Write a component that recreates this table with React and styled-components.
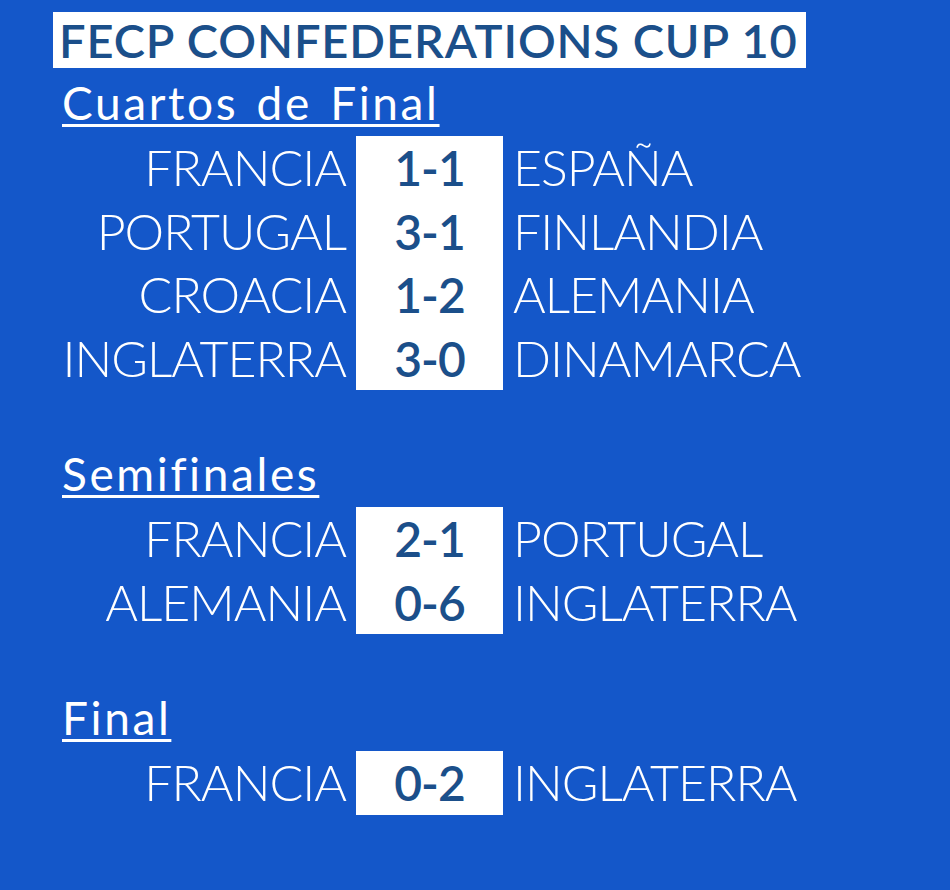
import React from "react";
import styled, { createGlobalStyle } from "styled-components";

const Global = createGlobalStyle`
  html, body { margin: 0; padding: 0; background: #1457c9; }
  body { font-family: "Lato", "Noto Sans", sans-serif; }
`;

const Page = styled.div`
  width: 950px;
  height: 890px;
  background: #1457c9;
  padding: 12px 0 0 53px;
  box-sizing: border-box;
  color: #ffffff;
`;

const TitleBox = styled.div`
  display: block;
  background: #ffffff;
  color: #1b4f8a;
  font-size: 47px;
  font-weight: 600;
  line-height: 57px;
  height: 56px;
  width: 753px;
  box-sizing: border-box;
  padding-left: 6px;
  white-space: nowrap;
  letter-spacing: 0.9px;
  overflow: hidden;
`;

const Section = styled.section`
  margin-top: ${(p) => p.$top}px;
`;

const Heading = styled.div`
  font-size: 46px;
  line-height: 58px;
  height: 58px;
  padding-top: 6px;
  margin: 0 0 4px 9px;
  text-decoration: underline;
  text-decoration-thickness: 3px;
  text-underline-offset: 4px;
  letter-spacing: 2.6px;
  word-spacing: 4px;
`;

const Table = styled.div`
  display: grid;
  grid-template-columns: 293px 147px auto;
  column-gap: 10px;
`;

const Team = styled.div`
  height: 63.5px;
  line-height: 63.5px;
  font-size: 50px;
  font-weight: 300;
  text-align: ${(p) => (p.$side === "left" ? "right" : "left")};
  white-space: nowrap;
  letter-spacing: -1px;
`;

const Score = styled.div`
  height: 63.5px;
  line-height: 63.5px;
  background: #ffffff;
  color: #1b4f8a;
  font-size: 48px;
  font-weight: 600;
  letter-spacing: -1px;
  text-align: center;
`;

const sections = [
  {
    title: "Cuartos de Final",
    top: 0,
    games: [
      ["FRANCIA", "1-1", "ESPAÑA"],
      ["PORTUGAL", "3-1", "FINLANDIA"],
      ["CROACIA", "1-2", "ALEMANIA"],
      ["INGLATERRA", "3-0", "DINAMARCA"],
    ],
  },
  {
    title: "Semifinales",
    top: 49,
    games: [
      ["FRANCIA", "2-1", "PORTUGAL"],
      ["ALEMANIA", "0-6", "INGLATERRA"],
    ],
  },
  {
    title: "Final",
    top: 49,
    games: [["FRANCIA", "0-2", "INGLATERRA"]],
  },
];

export default function App() {
  return (
    <>
      <Global />
      <Page>
        <TitleBox>FECP CONFEDERATIONS CUP 10</TitleBox>
        {sections.map((s) => (
          <Section key={s.title} $top={s.top}>
            <Heading>{s.title}</Heading>
            <Table>
              {s.games.map(([a, sc, b]) => (
                <React.Fragment key={a + b}>
                  <Team $side="left">{a}</Team>
                  <Score>{sc}</Score>
                  <Team $side="right">{b}</Team>
                </React.Fragment>
              ))}
            </Table>
          </Section>
        ))}
      </Page>
    </>
  );
}
